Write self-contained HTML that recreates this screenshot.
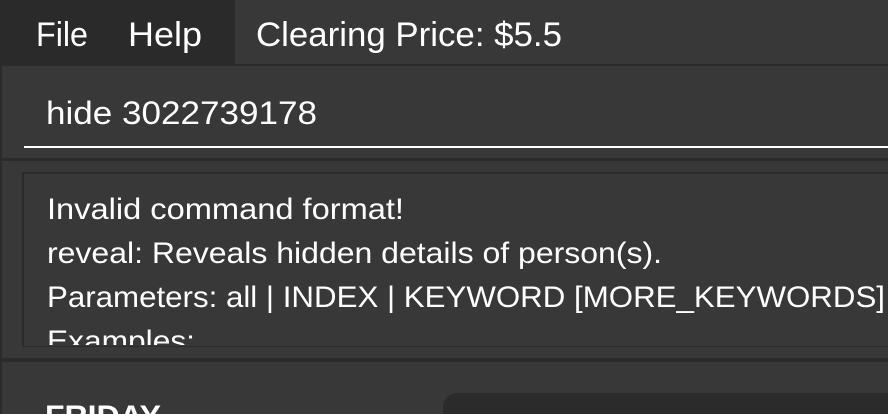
<!DOCTYPE html>
<html><head><style>
html,body{margin:0;padding:0;width:888px;height:414px;overflow:hidden;background:#2b2b2b}
svg{display:block}
text{font-family:"Liberation Sans",sans-serif;fill:#fff}
</style></head><body>
<svg width="888" height="414" viewBox="0 0 888 414">
<rect width="888" height="414" fill="#2b2b2b"/>
<!-- menubar -->
<rect x="0" y="0" width="235" height="64" fill="#2a2a2a"/>
<rect x="235" y="0" width="653" height="64" fill="#383838"/>
<text x="36" y="46" font-size="34" textLength="52" lengthAdjust="spacingAndGlyphs">File</text>
<text x="128" y="46" font-size="34" textLength="74" lengthAdjust="spacingAndGlyphs">Help</text>
<text x="256" y="46" font-size="34" textLength="306" lengthAdjust="spacingAndGlyphs">Clearing Price: $5.5</text>
<!-- command box -->
<rect x="2" y="66" width="886" height="92" fill="#383838"/>
<text x="46" y="124" font-size="32" textLength="271" lengthAdjust="spacingAndGlyphs">hide  3022739178</text>
<rect x="24" y="146" width="864" height="2" fill="#ffffff"/>
<!-- result area -->
<rect x="2" y="161" width="886" height="197" fill="#383838"/>
<rect x="22" y="172" width="866" height="175" fill="#2b2b2b"/>
<rect x="24" y="174" width="864" height="172" fill="#383838"/>
<svg x="24" y="174" width="864" height="171" viewBox="24 174 864 171">
<text x="47" y="219" font-size="30" textLength="357" lengthAdjust="spacingAndGlyphs">Invalid command format!</text>
<text x="47" y="263" font-size="30" textLength="615" lengthAdjust="spacingAndGlyphs">reveal: Reveals hidden details of person(s).</text>
<text x="47" y="307" font-size="30" textLength="838" lengthAdjust="spacingAndGlyphs">Parameters: all | INDEX | KEYWORD [MORE_KEYWORDS]</text>
<text x="47" y="351" font-size="30" textLength="148" lengthAdjust="spacingAndGlyphs">Examples:</text>
</svg>
<!-- bottom panel -->
<rect x="2" y="362" width="886" height="52" fill="#383838"/>
<rect x="443" y="393" width="460" height="40" rx="14" fill="#2b2b2b"/>
<text x="45" y="426" font-size="30" font-weight="bold" textLength="116" lengthAdjust="spacingAndGlyphs">FRIDAY</text>
</svg>
</body></html>
